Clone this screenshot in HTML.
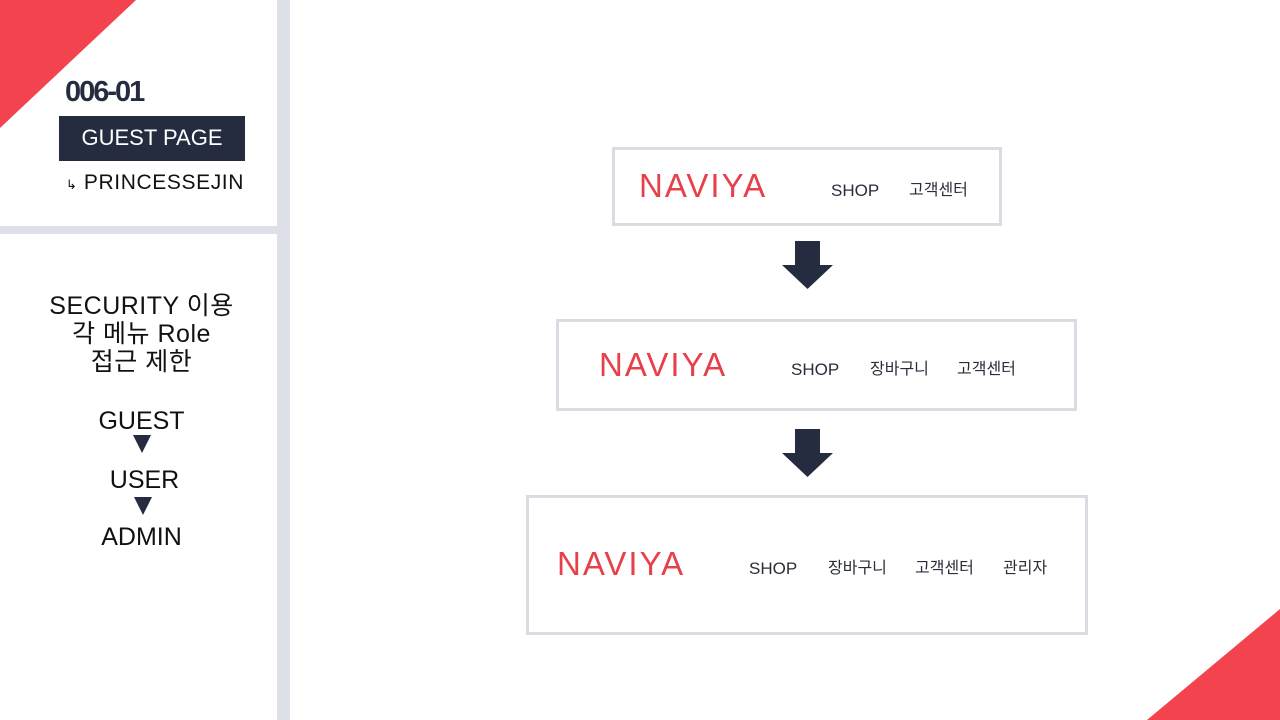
<!DOCTYPE html><html><head><meta charset="utf-8"><style>
body{margin:0;width:1280px;height:720px;position:relative;overflow:hidden;background:#fff;font-family:"Liberation Sans","Noto Sans CJK KR",sans-serif;}
.a{position:absolute}
.box{position:absolute;border:3px solid #d9dce3;box-sizing:border-box}
.logo{position:absolute;color:#e8404a;font-size:33px;letter-spacing:2px}
.m{position:absolute;color:#2a2d3a;font-size:17px;line-height:20px}
.c{position:absolute;left:0;width:283px;text-align:center;font-size:25px;color:#111;line-height:28px}
</style></head><body>
<svg class="a" style="left:0;top:0" width="1280" height="720">
<polygon points="0,0 136,0 0,128" fill="#f2434f"/>
<polygon points="1280,609 1280,720 1147,720" fill="#f2434f"/>
<rect x="277" y="0" width="13" height="720" fill="#dde0e8"/>
<rect x="0" y="226" width="277" height="8" fill="#dde0e8"/>
<polygon points="795,241 820,241 820,265 833,265 807.5,289 782,265 795,265" fill="#262c40"/>
<polygon points="795,429 820,429 820,453 833,453 807.5,477 782,453 795,453" fill="#262c40"/>
<polygon points="133,435 151,435 142,453" fill="#262c40"/>
<polygon points="134,497 152,497 143,515" fill="#262c40"/>
</svg>
<div class="a" style="left:65px;top:76px;font-size:29px;font-weight:bold;color:#262c40;letter-spacing:-2px">006-01</div>
<div class="a" style="left:59px;top:116px;width:186px;height:45px;background:#262c40;color:#fff;font-size:22px;line-height:44px;text-align:center">GUEST PAGE</div>
<div class="a" style="left:66px;top:171px;font-size:21px;color:#111;letter-spacing:0.6px"><span style="font-size:13px">↳</span> PRINCESSEJIN</div>
<div class="c" style="top:292px;font-size:25px;letter-spacing:0.5px">SECURITY 이용<br>각 메뉴 Role<br>접근 제한</div>
<div class="c" style="top:407px">GUEST</div>
<div class="c" style="top:466px;left:3px">USER</div>
<div class="c" style="top:523px">ADMIN</div>
<div class="box" style="left:612px;top:147px;width:390px;height:79px"></div>
<div class="logo" style="left:639px;top:167px">NAVIYA</div>
<div class="m" style="left:831px;top:181px">SHOP</div>
<div class="m" style="left:909px;top:181px;font-size:16px">고객센터</div>
<div class="box" style="left:556px;top:319px;width:521px;height:92px"></div>
<div class="logo" style="left:599px;top:346px">NAVIYA</div>
<div class="m" style="left:791px;top:360px">SHOP</div>
<div class="m" style="left:870px;top:360px;font-size:16px">장바구니</div>
<div class="m" style="left:957px;top:360px;font-size:16px">고객센터</div>
<div class="box" style="left:526px;top:495px;width:562px;height:140px"></div>
<div class="logo" style="left:557px;top:545px">NAVIYA</div>
<div class="m" style="left:749px;top:559px">SHOP</div>
<div class="m" style="left:828px;top:559px;font-size:16px">장바구니</div>
<div class="m" style="left:915px;top:559px;font-size:16px">고객센터</div>
<div class="m" style="left:1003px;top:559px;font-size:16px">관리자</div>
</body></html>
